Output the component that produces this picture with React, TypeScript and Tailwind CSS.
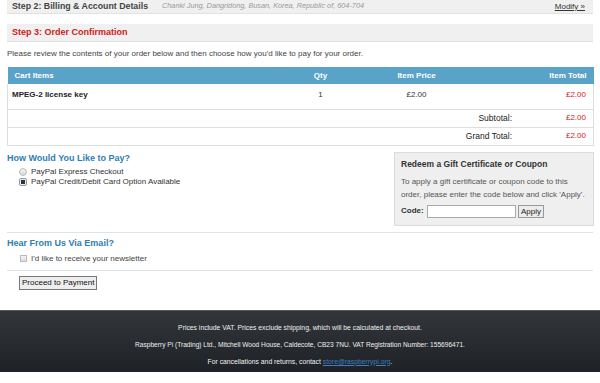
import React from 'react';

const font = { fontFamily: '"Liberation Sans", Arial, sans-serif' };

const StepBar: React.FC<{ children: React.ReactNode; className?: string }> = ({ children, className }) => (
  <div className={`mx-[7px] bg-[#f0f0f0] border-b border-[#e2e2e2] flex items-center px-[5px] ${className ?? ''}`}>
    {children}
  </div>
);

const TotalRow: React.FC<{ label: string }> = ({ label }) => (
  <tr className="h-[18px] border-x border-b border-[#dedede]">
    <td colSpan={4}>
      <div className="flex justify-end items-center pr-[7px]">
        <span className="text-[8.5px] text-[#222]">{label}</span>
        <span className="w-[74px] text-right text-[#d01818]">£2.00</span>
      </div>
    </td>
  </tr>
);

const App: React.FC = () => {
  return (
    <div className="w-[600px] h-[383px] bg-white overflow-hidden text-[#333]" style={font}>
      <StepBar className="h-[14px]">
        <span className="text-[8.8px] font-bold text-[#444] w-[150px]">Step 2: Billing &amp; Account Details</span>
        <span className="text-[7.3px] italic text-[#999] flex-1">Chanki Jung, Dangridong, Busan, Korea, Republic of, 604-704</span>
        <a className="text-[8px] underline text-[#333] mr-[3px]">Modify »</a>
      </StepBar>

      <StepBar className="h-[18px] mt-[10px]">
        <span className="text-[9px] font-bold text-[#cc2020]">Step 3: Order Confirmation</span>
      </StepBar>

      <p className="mx-[7px] mt-[6px] text-[8px] text-[#444] leading-[12px]">
        Please review the contents of your order below and then choose how you'd like to pay for your order.
      </p>

      <table className="mx-[7px] mt-[7px] w-[586px] border-collapse text-[8px] table-fixed">
        <thead>
          <tr className="bg-[#5aa3c8] text-white h-[17px]">
            <th className="text-left font-bold pl-[7px] w-[283px]">Cart Items</th>
            <th className="font-bold w-[60px]">Qty</th>
            <th className="font-bold w-[132px]">Item Price</th>
            <th className="text-right font-bold pr-[7px] w-[111px]">Item Total</th>
          </tr>
        </thead>
        <tbody>
          <tr className="h-[25px] border-x border-b border-[#dedede] align-top">
            <td className="pl-[4px] pt-[5px] font-bold text-[#222]">MPEG-2 license key</td>
            <td className="pt-[5px] text-center">1</td>
            <td className="pt-[5px] text-center">£2.00</td>
            <td className="pt-[5px] text-right pr-[7px] text-[#d01818]">£2.00</td>
          </tr>
          <TotalRow label="Subtotal:" />
          <TotalRow label="Grand Total:" />
        </tbody>
      </table>

      <div className="flex justify-between mt-[6px] pl-[7px] pr-[6px]">
        <div>
          <h3 className="text-[9px] font-bold text-[#2f7db3] leading-[12px]">How Would You Like to Pay?</h3>
          <div className="pl-[12px] mt-[3px] text-[8px] text-[#333] leading-[10px]">
            <label className="flex items-center gap-[4px]">
              <span className="w-[8px] h-[8px] rounded-full border border-[#bbb] bg-gradient-to-b from-[#f4f4f4] to-[#d8d8d8]" />
              PayPal Express Checkout
            </label>
            <label className="flex items-center gap-[4px]">
              <span className="w-[8px] h-[8px] rounded-[2px] border border-[#8a9bb0] bg-[#e8eef5] flex items-center justify-center">
                <span className="w-[4px] h-[4px] bg-[#333]" />
              </span>
              PayPal Credit/Debit Card Option Available
            </label>
          </div>
        </div>

        <div className="w-[200px] h-[74px] bg-[#efefef] border border-[#dcdcdc] px-[6px] pt-[5px]">
          <h4 className="text-[8.5px] font-bold text-[#333] leading-[12px]">Redeem a Gift Certificate or Coupon</h4>
          <div className="mt-[5px] text-[8px] text-[#555] leading-[13px]">
            To apply a gift certificate or coupon code to this order, please enter the code below and click 'Apply'.
          </div>
          <div className="flex items-center mt-[4px] text-[8px]">
            <span className="font-bold text-[#333] w-[26px]">Code:</span>
            <span className="w-[89px] h-[13px] bg-white border border-[#aaa]" />
            <span className="ml-[2px] h-[13px] px-[2px] border border-[#999] bg-[#ececec] leading-[11px] text-[#222]">Apply</span>
          </div>
        </div>
      </div>

      <div className="mx-[7px] mt-[6px] border-t border-[#dde3ea]" />

      <div className="px-[7px] pt-[4px]">
        <h3 className="text-[9px] font-bold text-[#2f7db3] leading-[12px]">Hear From Us Via Email?</h3>
        <label className="flex items-center gap-[4px] pl-[13px] mt-[5px] text-[8px] text-[#444] leading-[10px]">
          <span className="w-[7px] h-[7px] border border-[#bbb] bg-gradient-to-b from-[#f4f4f4] to-[#dcdcdc]" />
          I'd like to receive your newsletter
        </label>
      </div>

      <div className="mx-[7px] mt-[6px] border-t border-[#dde3ea]" />

      <div className="flex pl-[19px] mt-[5px]">
        <button className="h-[14px] px-[2px] border border-[#777] bg-[#eeeeee] text-[8px] text-[#111] leading-[12px]">
          Proceed to Payment
        </button>
      </div>

      <footer className="mt-[20px] h-[62px] border-t border-[#555] bg-gradient-to-b from-[#33373c] to-[#1e2125] flex flex-col items-center pt-[12px] gap-[7px] text-[6.8px] text-[#f0f0f0] leading-[10px]">
        <p>Prices include VAT. Prices exclude shipping, which will be calculated at checkout.</p>
        <p className="text-[6.6px]">Raspberry Pi (Trading) Ltd., Mitchell Wood House, Caldecote, CB23 7NU. VAT Registration Number: 155696471.</p>
        <p>
          For cancellations and returns, contact <a className="text-[#3d7fc4] underline">store@raspberrypi.org</a>.
        </p>
      </footer>
    </div>
  );
};

export default App;
